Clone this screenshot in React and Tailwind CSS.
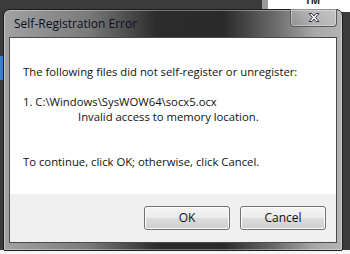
import React from "react";

function CloseX() {
  return (
    <svg width="14" height="11" viewBox="0 0 14 11">
      <path
        d="M2 1.5 L5 1.5 L7 4 L9 1.5 L12 1.5 L8.6 5.5 L12 9.5 L9 9.5 L7 7 L5 9.5 L2 9.5 L5.4 5.5 Z"
        fill="#f4f4f8"
        stroke="#3a3a4a"
        strokeWidth="1"
        strokeLinejoin="round"
      />
    </svg>
  );
}

function Btn({ children }) {
  return (
    <div className="w-[86px] h-[24px] rounded-[3px] border border-[#707070] bg-[linear-gradient(to_bottom,#f4f4f4_0%,#ebebeb_48%,#dcdcdc_52%,#cfcfcf_100%)] shadow-[inset_0_0_0_1px_#fcfcfc] flex items-center justify-center text-[12px] text-[#111]">
      {children}
    </div>
  );
}

export default function App() {
  return (
    <div
      className="relative w-[350px] h-[254px] overflow-hidden bg-[#3b3b3b]"
      style={{ fontFamily: '"Open Sans", "Noto Sans", sans-serif' }}
    >
      {/* background desktop content */}
      <div className="absolute left-[262px] top-0 w-[6px] h-[10px] bg-[#9a9a9a]" />
      <div className="absolute left-[268px] top-0 w-[82px] h-[12px] bg-white" />
      <div className="absolute left-[305px] top-[-5px] text-[10px] leading-[10px] font-bold text-[#222]">TM</div>
      <div className="absolute left-0 top-[56px] w-[3px] h-[24px] bg-[#3a7bd5]" />
      <div className="absolute left-0 bottom-0 w-[350px] h-[4px] bg-[#f4f4f4]" />

      {/* window */}
      <div className="relative ml-[3px] mt-[9px] w-[340px] h-[242px] rounded-t-[7px] rounded-b-[2px] border border-[#1e1e1e] bg-[linear-gradient(to_right,#a2a2a2_0%,#7a7a7a_25%,#2c2c2c_45%,#2a2a2a_65%,#6a6a6a_80%,#a8a8a8_92%,#b4b4b4_100%)] shadow-[inset_0_0_0_1px_rgba(255,255,255,0.35)] flex flex-col px-[5px] pb-[7px]">
        <div className="h-[27px] flex items-start justify-between">
          <div className="self-center pl-[5px] pt-[1px] text-[12px] text-[#0a1020]">
            Self-Registration Error
          </div>
          <div className="mt-[-1px] mr-0 w-[47px] h-[18px] rounded-b-[4px] border border-[#5a5a5a] border-t-0 bg-[linear-gradient(to_bottom,rgba(255,255,255,0.25),rgba(255,255,255,0.1))] shadow-[inset_0_0_0_1px_rgba(255,255,255,0.35)] flex items-center justify-center">
            <CloseX />
          </div>
        </div>
        <div className="flex-1 flex flex-col border border-[#4a4a4a] bg-white">
          <div className="flex-1 pl-[13px] pt-[26px] text-[11.3px] leading-[15px] text-[#111]">
            <div>The following files did not self-register or unregister:</div>
            <div className="h-[15px]" />
            <div>1. C:\Windows\SysWOW64\socx5.ocx</div>
            <div className="pl-[55px]">Invalid access to memory location.</div>
            <div className="h-[30px]" />
            <div>To continue, click OK; otherwise, click Cancel.</div>
          </div>
          <div className="h-[48px] bg-[#f0f0f0] flex items-start justify-end gap-[10px] pt-[12px] pr-[10px]">
            <Btn>OK</Btn>
            <Btn>Cancel</Btn>
          </div>
        </div>
      </div>
    </div>
  );
}
